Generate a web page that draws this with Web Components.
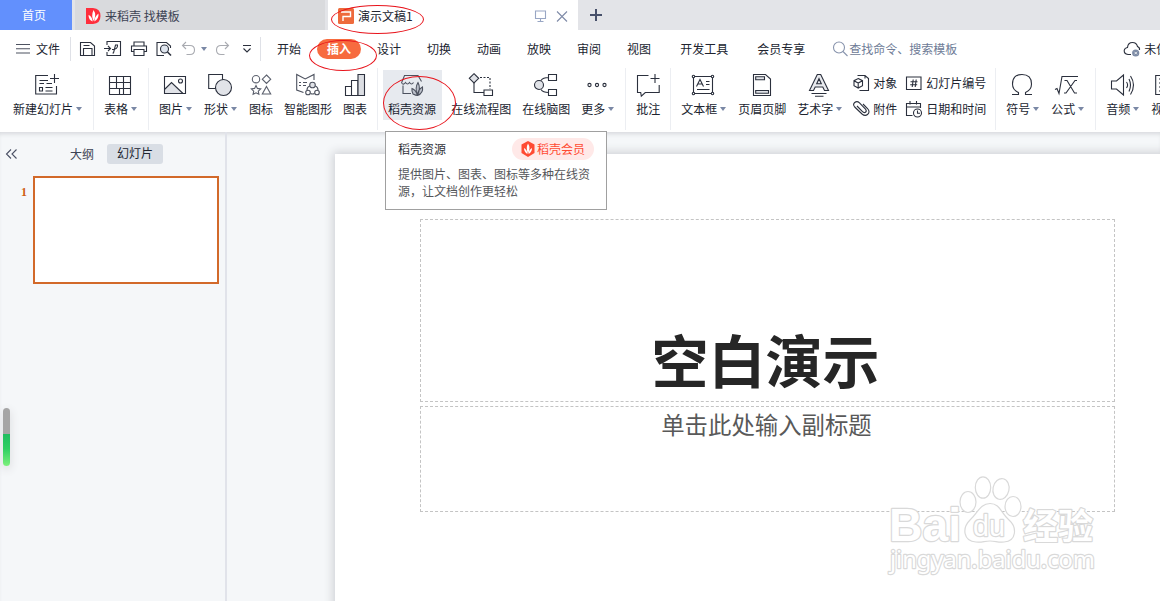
<!DOCTYPE html>
<html lang="zh-CN">
<head>
<meta charset="utf-8">
<title>演示文稿1</title>
<style>
    html, body {
        margin: 0;
        height: 100%;
        overflow: hidden;
    }

    body {
        font: 12px/16px "Noto Sans CJK SC", "Liberation Sans", sans-serif;
        color: #20242f;
        background: #f5f7f9;
    }
</style>
</head>
<body>
<presentation-app></presentation-app>

<script>
const ICONS = {
    newslide: '<path d="M13 2.5H.7V21H21.5V13M4.500 7.500H13M4.500 10.500H9M11.500 10.500H17M10.500 14.500H17.500M10.500 18H17.500M4.500 14.500H7.500V18H4.500ZM19.500 1V10M15 5.500H24"/>',
    table: '<path d="M1.500 3.500H22.500V21.500H1.500ZM1.500 9.500H22.500M1.500 15.500H22.500M8.500 3.500V15.500M15.500 3.500V9.500M11.500 15.500V21.500M15.500 9.500V21.500"/>',
    picture: '<path fill="#e1e3e8" d="M2 17 8.500 9.500 20 21H2Z" stroke="none"/><path d="M1.500 3.500H22.500V20.500H1.500ZM1.500 16.500 8.500 9.500 20 20.500"/><circle cx="17.500" cy="8" r="2"/>',
    shape: '<path d="M.7 1.500H14.500V15.500H.7Z"/><circle cx="15.500" cy="14.500" r="8" fill="#e1e3e8"/>',
    glyphs: '<g stroke="#5b606d"><circle cx="7" cy="6.200" r="3.700"/><path d="M17.500 2 21.700 6.200 17.500 10.500 13.300 6.200ZM17.500 13.500 21.700 21H13.300ZM7 12.500 8.400 15.400 11.700 15.900 9.300 18.100 9.900 21.300 7 19.800 4.100 21.300 4.700 18.100 2.300 15.900 5.600 15.400Z"/></g>',
    smart: '<g stroke="#4d525f"><path d="M7.500 19.500.7 17V1.500L9.200 6 18 1.500V7M3 9.500H5M7 9.500H11M3 12.500H5M7 12.500H10" /><circle cx="16.500" cy="12" r="2.800" fill="#e1e3e8"/><circle cx="12" cy="19.500" r="2.300"/><circle cx="21" cy="19.500" r="2.300"/><path d="M13.700 13Q11 14 11 17M19.300 13Q22 14 22 17M14.500 20.500Q16.500 21.500 18.500 20.500"/></g>',
    chart: '<path d="M2.500 13.500H8.500V22.500H2.500ZM8.500 7.500H15V22.500H8.500Z"/><path fill="#dcdee3" d="M15 1.500H21.500V22.500H15Z"/>',
    store: '<g stroke="#4d525f"><path d="M1.500 10 4.500 2.500H18L21.500 8.500M1.500 10Q3.500 12.500 5.500 9.500 7.500 12.500 9.500 9.500 11.500 12.500 13.500 9.500M3 12.500V20.500H11"/><path fill="#bcc0ca" d="M17.500 22.500Q14.500 15 18 9.500 21 15 17.500 22.500Q16 22.500 13 21 11.500 18 12 15.500 16 17 17.500 22.500Q17.500 17 22.500 14 23.500 20 17.500 22.500"/></g>',
    flow: '<path fill="#e1e3e8" d="M5 .7 9.700 5.300 5 10 .3 5.300Z"/><path d="M5 10V19.500H15M15 17H23.500V22.500H15Z"/><path stroke-dasharray="2 1.500" d="M11 4.500H21V16"/>',
    mind: '<circle cx="5" cy="12" r="4.500" fill="#e1e3e8"/><path d="M14.500 1.500H22.500V7.500H14.500ZM14.500 16.500H22.500V22.500H14.500ZM7 7.500Q9 4.500 14.500 4.500M7 16.500Q9 19.500 14.500 19.500"/>',
    more: '<circle cx="4.500" cy="12" r="1.600"/><circle cx="12" cy="12" r="1.600"/><circle cx="19.500" cy="12" r="1.600"/>',
    comment: '<path d="M12.500 2.500H1.500V19.500H4.700L5.300 23.200 9.300 19.500H23.200V12M19 1V10M14.500 5.500H23.500"/>',
    textbox: '<path d="M2.500 3.500H21.500V20.500H2.500ZM15 8.500H18.500M15 11.500H18.500M6 16.500H18.500"/><g fill="#fff"><circle cx="2.500" cy="3.500" r="1.200"/><circle cx="21.500" cy="3.500" r="1.200"/><circle cx="2.500" cy="20.500" r="1.200"/><circle cx="21.500" cy="20.500" r="1.200"/></g><path d="M5.500 13.500 9 6.500 12.500 13.500M6.700 11H11.300"/>',
    header: '<path d="M3.500 1.500H15.500L20.500 6V22.500H3.500Z"/><path fill="#e1e3e8" d="M5.700 3.700H14.500V6.700H5.700ZM5.700 17.500H18.500V20.300H5.700Z"/>',
    wordart: '<path fill="#e8eaee" d="M2.500 17.500 10.300 1.500H13.700L21.500 17.500H17.500L15.800 14H8.200L6.500 17.500ZM9.700 10.800 12 5.700 14.300 10.800Z"/><path d="M4.500 20.500H19.500M8 23.300H16.500"/>',
    omega: '<path d="M2 21.500H8.500V19.500Q2.500 17 2.500 11 2.500 1.500 12 1.500 21.500 1.500 21.500 11 21.500 17 15.500 19.500V21.500H22"/>',
    formula: '<path d="M0 16.500 2 15.500 4 20.500 7 3.500H23M9.500 7.500H12L19.500 20H22M22 7.500H20L11 20H9"/>',
    audio: '<path d="M1.500 8H6.500L13.500 2V22L6.500 16H1.500Z" /><path d="M16.500 9Q18.700 12 16.500 15M19 6Q22 12 19 18.500M20.500 3Q26.500 12 20.500 21.500"/>',
    video: '<path d="M.7 2.500H23V21.500H.7ZM4 6H5.500M4 10H5.500M4 14H5.500M4 18H5.500M8 2.500V21.500"/>',
    object: '<path d="M5.500 1.500H13L16.500 4.500V16.500H7.500M13 1.500V4.500"/><path fill="#fff" d="M6.200 4.500 10.500 6.700V11.700L6.200 14 2 11.700V6.700ZM2 6.700 6.200 9 10.500 6.700M6.200 9V14"/>',
    clip: '<path d="M11 4 15.500 8.500Q18.500 12 15.500 14.500 13 16.500 10 14L2.700 7Q.5 4.500 2.700 2.500 5 .5 7.500 2.800L13.500 9Q15 11 13.500 12.300 12 13.200 10.500 11.700L5 6"/>',
    number: '<path d="M1.500 3H16V15.500H1.500ZM8.200 5.500 7.200 13M11.200 5.500 10.200 13M5.500 7.700H12.500M5.200 10.700H12.200"/>',
    date: '<path d="M7.500 15.500H1.500V3.500H15.500V8M1.500 7H15.500M5 1V4.500M11.500 1V4.500"/><circle cx="12.500" cy="13" r="4"/><path d="M12.500 10.500V13.200H15"/>',
    menu: '<path stroke="#4d5260" d="M2 4.500H16M2 8.700H16M2 13H16"/>',
    save: '<path d="M1.500 2.500H11.500L15.500 6V15.500H1.500ZM4.500 15.500V8.500H13V15.500M4.500 5.500H10.500"/>',
    export: '<path d="M3 5V1.500H16.500V15.500H3V12M0 8.500H6M4 6 6.500 8.500 4 11M8.500 13H9.500L11.500 5H13.500Q14 9.500 8 9.500"/>',
    print: '<path d="M4 6V2H14V6M4 11.500H1.500V6H16.500V11.500H14M4 9.500H14V15.500H4Z"/>',
    preview: '<path d="M9 15.500H2V2.500H11.500L15.500 6V8"/><circle cx="9.500" cy="9" r="4" fill="#dfe5ee"/><path stroke-width="1.600" d="M12.500 12 16 15.500"/>',
    undo: '<path stroke="#a9abb1" d="M6 2 2.500 5.500 6 9M2.500 5.500H10Q14.500 5.500 14.500 10 14.500 14.500 10 14.500H6.500"/>',
    redo: '<path stroke="#a9abb1" d="M12 2 15.500 5.500 12 9M15.500 5.500H8Q3.500 5.500 3.500 10 3.500 14.500 8 14.500H11.500"/>',
    expand: '<path d="M5 5.500H13M5.500 8.500 9 12 12.500 8.500"/>',
    search: '<g stroke="#8894ad"><circle cx="8" cy="7.500" r="5.500"/><path d="M12 11.500 16.500 16"/></g>',
    cloud: '<path d="M8 14.500H5Q1 14 1.200 10.500 1.500 8 4.500 7.500 5 2.500 9.500 2.500 13.500 2.500 14.500 6.500 17 7.500 16.500 10"/><circle cx="12.700" cy="13" r="3.600" fill="#7d8ba5" stroke="none"/><path stroke="#fff" stroke-width=".8" d="M11.500 11.800 14 14.300M14 11.800 11.500 14.300"/>',
    docer: '<path fill="#ff2e3c" stroke="none" d="M2 1H9Q16.500 1.500 16.500 9 16.500 16.500 9 17H2Z"/><path fill="#fff" stroke="none" d="M9.500 3Q13 8 9.500 14 7 8.500 9.500 3ZM4.500 8Q8 9 8.700 14.500 4.500 13 4.500 8ZM14.500 6.500Q15 12 10.300 14.500 10.500 9.500 14.500 6.500Z"/>',
    wpp: '<rect x="1" y="1" width="16" height="16" rx="1.500" fill="#ee6a3c" stroke="none"/><path stroke="#fff" stroke-width="1.400" d="M4 5H13.500V9.500H6V14"/>',
    screen: '<path stroke="#98a6c4" d="M3.500 4H13.500V11.500H3.500ZM8.500 11.500V14M5.500 14.500H11.500"/>',
    close: '<path stroke="#7f8ba8" d="M4 4.500 14 14.500M14 4.500 4 14.500"/>',
    plus: '<path stroke="#47506a" stroke-width="2" d="M9 3V15M3 9H15"/>',
    collapse: '<path stroke="#4a5064" d="M8 4.500 3.500 9 8 13.500M13.500 4.500 9 9 13.500 13.500"/>',
    vip: '<path fill="#ff4b33" stroke="none" d="M9 1 15.500 4.500V13L9 17 2.500 13V4.500Z"/><path fill="#fff" stroke="none" d="M9 3.500Q12 8 9 13.500 6.500 8 9 3.500ZM5 8Q8 9.500 8.500 14 5 12 5 8ZM13 8Q13 12 9.500 14 10 9.500 13 8Z"/>'
};

class UiIcon extends HTMLElement {
    connectedCallback() {
        const size = this.getAttribute('size') || 18;
        this.attachShadow({mode: 'open'}).innerHTML = `
        <style>
        :host { display: block; flex: none; width: ${size}px; height: ${size}px; }
        svg { display: block; overflow: visible; fill: none; stroke: #2b303d; stroke-width: 1.1; }
        </style>
        <svg width="${size}" height="${size}">${ICONS[this.getAttribute('name')]}</svg>
        `;
    }
}

class DocTab extends HTMLElement {
    connectedCallback() {
        const icon = this.getAttribute('icon');
        this.attachShadow({mode: 'open'}).innerHTML = `
        <style>
        :host {
            display: flex;
            align-items: center;
            gap: 3px;
            box-sizing: border-box;
            height: 30px;
            padding: 1px 0 0 9px;
            background: #d9dadd;
            color: #3d4354;
        }
        :host([kind=home]) {
            justify-content: center;
            padding: 0 4px 0 0;
            background: #6290fd;
            color: #fff;
        }
        :host([kind=active]) { background: #fff; color: #20242f; }
        span { flex: 1; }
        :host([kind=home]) span { flex: none; }
        </style>
        ${icon ? `<ui-icon name="${icon}"></ui-icon>` : ''}
        <span><slot></slot></span>
        <slot name="end"></slot>
        `;
    }
}

class TitleBar extends HTMLElement {
    connectedCallback() {
        this.attachShadow({mode: 'open'}).innerHTML = `
        <style>
        :host { display: flex; gap: 3px; height: 30px; background: #e3e4e8; }
        .home { width: 72px; }
        .docer { width: 250px; }
        .doc { width: 250px; padding-right: 7px; }
        .add { align-self: center; margin-left: 6px; }
        </style>
        <doc-tab class="home" kind="home">首页</doc-tab>
        <doc-tab class="docer" icon="docer">来稻壳 找模板</doc-tab>
        <doc-tab class="doc" kind="active" icon="wpp">演示文稿1
            <ui-icon slot="end" name="screen"></ui-icon>
            <ui-icon slot="end" name="close"></ui-icon>
        </doc-tab>
        <ui-icon class="add" name="plus"></ui-icon>
        `;
    }
}

class MenuItem extends HTMLElement {
    connectedCallback() {
        this.attachShadow({mode: 'open'}).innerHTML = `
        <style>
        :host { display: block; padding: 0 13px; white-space: nowrap; }
        :host([wide]) { padding-left: 16px; }
        :host([active]) {
            margin: 0 3px;
            padding: 2px 10px;
            border-radius: 10px;
            background: #f76b3f;
            color: #fff;
            font-weight: bold;
        }
        </style>
        <slot></slot>
        `;
    }
}

class MenuBar extends HTMLElement {
    connectedCallback() {
        this.attachShadow({mode: 'open'}).innerHTML = `
        <style>
        :host {
            display: flex;
            align-items: center;
            height: 38px;
            background: #fff;
            overflow: hidden;
            white-space: nowrap;
        }
        :host > * { flex: none; }
        .file { display: flex; gap: 4px; align-items: center; width: 56px; padding-left: 14px; }
        .quick {
            display: flex;
            align-items: center;
            justify-content: space-between;
            box-sizing: border-box;
            width: 191px;
            height: 24px;
            padding: 0 4px 0 8px;
            border: solid #dfe1e7;
            border-width: 0 1px;
        }
        .arrow { border: 3px solid transparent; border-top: 4px solid #7a88a5; border-bottom: 0; margin: 0 -2px 0 -4px; }
        .menus { display: flex; align-items: center; margin-left: 3px; }
        .search { display: flex; align-items: center; margin-left: 13px; color: #6e7b96; }
        .cloud { display: flex; align-items: center; gap: 3px; margin-left: 166px; }
        </style>
        <div class="file"><ui-icon name="menu"></ui-icon>文件</div>
        <div class="quick">
            <ui-icon name="save"></ui-icon>
            <ui-icon name="export"></ui-icon>
            <ui-icon name="print"></ui-icon>
            <ui-icon name="preview"></ui-icon>
            <ui-icon name="undo"></ui-icon>
            <i class="arrow"></i>
            <ui-icon name="redo"></ui-icon>
            <ui-icon name="expand"></ui-icon>
        </div>
        <div class="menus">
            <menu-item>开始</menu-item>
            <menu-item active>插入</menu-item>
            <menu-item>设计</menu-item>
            <menu-item>切换</menu-item>
            <menu-item>动画</menu-item>
            <menu-item>放映</menu-item>
            <menu-item>审阅</menu-item>
            <menu-item>视图</menu-item>
            <menu-item wide>开发工具</menu-item>
            <menu-item wide>会员专享</menu-item>
        </div>
        <div class="search"><ui-icon name="search"></ui-icon>查找命令、搜索模板</div>
        <div class="cloud"><ui-icon name="cloud"></ui-icon>未保存</div>
        `;
    }
}

class ToolButton extends HTMLElement {
    connectedCallback() {
        this.attachShadow({mode: 'open'}).innerHTML = `
        <style>
        :host {
            display: flex;
            flex-direction: column;
            align-items: center;
            flex: none;
            gap: 4px;
            height: 44px;
            padding: 3px 5.5px;
            white-space: nowrap;
        }
        :host([active]) { background: #e7eaef; }
        :host([drop]) ui-icon { margin-right: 2px; }
        :host([drop]) span::after {
            content: "";
            display: inline-block;
            margin: 0 1px 3px 3px;
            border: 3px solid transparent;
            border-top: 4px solid #7a88a5;
            border-bottom: 0;
        }
        </style>
        <ui-icon size="24" name="${this.getAttribute('icon')}"></ui-icon>
        <span><slot></slot></span>
        `;
    }
}

class ToolRow extends HTMLElement {
    connectedCallback() {
        this.attachShadow({mode: 'open'}).innerHTML = `
        <style>
        :host { display: flex; align-items: center; gap: 3px; height: 26px; white-space: nowrap; }
        </style>
        <ui-icon name="${this.getAttribute('icon')}"></ui-icon><slot></slot>
        `;
    }
}

class ToolGroup extends HTMLElement {
    connectedCallback() {
        this.attachShadow({mode: 'open'}).innerHTML = `
        <style>
        :host {
            display: flex;
            flex: none;
            align-items: flex-start;
            height: 60px;
            padding: 2px 4.5px 0;
            border-right: 1px solid #eceef2;
        }
        </style>
        <slot></slot>
        `;
    }
}

class RibbonBar extends HTMLElement {
    connectedCallback() {
        this.attachShadow({mode: 'open'}).innerHTML = `
        <style>
        :host {
            display: flex;
            height: 64px;
            background: #fff;
            overflow: hidden;
        }
        .first { padding-left: 7.5px; }
        .flow { margin-left: 4px; }
        .rows { display: grid; grid-template-columns: auto auto; column-gap: 8px; margin-left: 3.5px; }
        .text { padding-right: 9px; }
        </style>
        <tool-group class="first"><tool-button drop icon="newslide">新建幻灯片</tool-button></tool-group>
        <tool-group><tool-button drop icon="table">表格</tool-button></tool-group>
        <tool-group>
            <tool-button drop icon="picture">图片</tool-button>
            <tool-button drop icon="shape">形状</tool-button>
            <tool-button icon="glyphs">图标</tool-button>
            <tool-button icon="smart">智能图形</tool-button>
            <tool-button icon="chart">图表</tool-button>
        </tool-group>
        <tool-group>
            <tool-button active icon="store">稻壳资源</tool-button>
            <tool-button class="flow" icon="flow">在线流程图</tool-button>
            <tool-button icon="mind">在线脑图</tool-button>
            <tool-button drop icon="more">更多</tool-button>
        </tool-group>
        <tool-group><tool-button icon="comment">批注</tool-button></tool-group>
        <tool-group class="text">
            <tool-button drop icon="textbox">文本框</tool-button>
            <tool-button icon="header">页眉页脚</tool-button>
            <tool-button drop icon="wordart">艺术字</tool-button>
            <div class="rows">
                <tool-row icon="object">对象</tool-row>
                <tool-row icon="number">幻灯片编号</tool-row>
                <tool-row icon="clip">附件</tool-row>
                <tool-row icon="date">日期和时间</tool-row>
            </div>
        </tool-group>
        <tool-group>
            <tool-button drop icon="omega">符号</tool-button>
            <tool-button drop icon="formula">公式</tool-button>
        </tool-group>
        <tool-group>
            <tool-button drop icon="audio">音频</tool-button>
            <tool-button drop icon="video">视频</tool-button>
        </tool-group>
        `;
    }
}

class SlidePane extends HTMLElement {
    connectedCallback() {
        this.attachShadow({mode: 'open'}).innerHTML = `
        <style>
        :host {
            display: block;
            flex: none;
            width: 225px;
            border-right: 2px solid #e1e3ea;
        }
        header { display: flex; align-items: center; height: 20px; padding: 12px 0 12px 3px; color: #3d4354; }
        .outline { margin: -1px 0 0 49px; }
        .slides {
            margin-left: 13px;
            padding: 1px 10px 3px;
            border-radius: 3px;
            background: #d9dee5;
            color: #20242f;
        }
        .slide { display: flex; }
        b { width: 27px; margin-right: 6px; box-sizing: border-box; padding-top: 8px; text-align: right; font-family: "Liberation Serif", serif; color: #cf5f14; }
        .thumb { box-sizing: border-box; width: 186px; height: 108px; border: 2px solid #d2692a; background: #fff; }
        .level {
            position: absolute;
            left: 3px;
            top: 408px;
            width: 7px;
            height: 58px;
            border-radius: 4px;
            background: linear-gradient(#a5a5a5 44%, #1fbd60 44%, #2fcf63 70%, #7cf07c);
            box-shadow: 0 3px 8px 1px #dfe0e3;
        }
        </style>
        <header>
            <ui-icon name="collapse"></ui-icon>
            <span class="outline">大纲</span>
            <span class="slides">幻灯片</span>
        </header>
        <div class="slide"><b>1</b><div class="thumb"></div></div>
        <div class="level"></div>
        `;
    }
}

class SlideCanvas extends HTMLElement {
    connectedCallback() {
        this.attachShadow({mode: 'open'}).innerHTML = `
        <style>
        :host { display: block; flex: 1; overflow: hidden; }
        .page {
            display: grid;
            grid-template-rows: 183px 106px;
            grid-template-columns: 695px;
            row-gap: 4px;
            box-sizing: border-box;
            width: 866px;
            height: 488px;
            margin: 22px 0 0 108px;
            padding: 65px 86px 0 85px;
            background: #fff;
            box-shadow: 0 0 9px 2px #cfd1d5;
        }
        .page > div {
            display: flex;
            justify-content: center;
            box-sizing: border-box;
            border: 1px dashed #c4c4c4;
        }
        .title {
            align-items: flex-end;
            padding: 0 4px 7px 0;
            font-size: 57px;
            font-weight: bold;
            line-height: 72px;
            color: #262626;
        }
        .sub { padding: 0 2px 0 0; font-size: 23.4px; line-height: 34px; color: #595959; }
        </style>
        <div class="page">
            <div class="title">空白演示</div>
            <div class="sub">单击此处输入副标题</div>
        </div>
        `;
    }
}

class TipCard extends HTMLElement {
    connectedCallback() {
        this.attachShadow({mode: 'open'}).innerHTML = `
        <style>
        :host {
            position: absolute;
            left: 385px;
            top: 131px;
            box-sizing: border-box;
            width: 222px;
            height: 79px;
            padding: 6px 12px 0 12px;
            border: 1px solid #a0a0a0;
            background: #fff;
            color: #55565a;
        }
        header { display: flex; align-items: center; justify-content: space-between; height: 22px; color: #303238; }
        .vip {
            display: flex;
            align-items: center;
            height: 22px;
            padding: 0 9px 0 7px;
            border-radius: 11px;
            background: #ffe9e8;
            color: #ff4b33;
        }
        p { margin: 5px -3px 0 0; line-height: 17px; }
        </style>
        <header>
            <slot name="title"></slot>
            <span class="vip"><ui-icon name="vip"></ui-icon>稻壳会员</span>
        </header>
        <p><slot></slot></p>
        `;
    }
}

// hand-drawn style ellipse laid over the window
class InkRing extends HTMLElement {
    connectedCallback() {
        this.attachShadow({mode: 'open'}).innerHTML = `
        <style>
        :host {
            position: absolute;
            box-sizing: border-box;
            border: 1px solid #e8141c;
            border-radius: 50%;
            pointer-events: none;
        }
        </style>
        `;
    }
}

class WaterMark extends HTMLElement {
    connectedCallback() {
        this.attachShadow({mode: 'open'}).innerHTML = `
        <style>
        :host { position: absolute; left: 880px; top: 470px; }
        svg { display: block; fill: #fff; stroke: #d9d9d9; stroke-width: 1.2; stroke-linejoin: round; }
        text { paint-order: stroke; stroke-width: 2.4; font-family: "Liberation Sans", sans-serif; }
        </style>
        <svg width="230" height="120">
            <text x="9" y="71" font-size="46" font-weight="bold" textLength="72" lengthAdjust="spacingAndGlyphs">Bai</text>
            <ellipse cx="88" cy="32" rx="8" ry="10.500"/>
            <ellipse cx="103" cy="17.500" rx="7.700" ry="10.700"/>
            <ellipse cx="121" cy="19" rx="8" ry="10.500" transform="rotate(12 121 19)"/>
            <ellipse cx="133" cy="36.500" rx="8" ry="10"/>
            <path d="M110 33.500C120 33.500 121 43 129 50 137 57 137 71 124 72 117 72.500 116 71 110 71 104 71 103 72.500 96 72 83 71 82 58 90 50 98 43 100 33.500 110 33.500Z"/>
            <text x="93" y="66" font-size="29" textLength="32" lengthAdjust="spacingAndGlyphs">du</text>
            <text x="143" y="69" font-size="35" font-weight="bold" textLength="70" style="font-family:'Noto Sans CJK SC',sans-serif">经验</text>
            <text x="10" y="98" font-size="24" textLength="205" lengthAdjust="spacingAndGlyphs" style="font-family:'Noto Sans',sans-serif">jingyan.baidu.com</text>
        </svg>
        `;
    }
}

class PresentationApp extends HTMLElement {
    connectedCallback() {
        this.attachShadow({mode: 'open'}).innerHTML = `
        <style>
        :host { display: flex; flex-direction: column; position: relative; height: 100vh; overflow: hidden; }
        main { display: flex; flex: 1; min-height: 0; box-shadow: inset 0 4px 4px -2px #d7d9dd; }
        .ring-doc { left: 331px; top: 5px; width: 93px; height: 29px; }
        .ring-menu { left: 309px; top: 40px; width: 68px; height: 31px; }
        .ring-tool { left: 383px; top: 76px; width: 73px; height: 54px; }
        </style>
        <title-bar></title-bar>
        <menu-bar></menu-bar>
        <ribbon-bar></ribbon-bar>
        <main>
            <slide-pane></slide-pane>
            <slide-canvas></slide-canvas>
        </main>
        <ink-ring class="ring-doc"></ink-ring>
        <ink-ring class="ring-menu"></ink-ring>
        <ink-ring class="ring-tool"></ink-ring>
        <tip-card><span slot="title">稻壳资源</span>提供图片、图表、图标等多种在线资源，让文档创作更轻松</tip-card>
        <water-mark></water-mark>
        `;
    }
}

customElements.define('ui-icon', UiIcon);
customElements.define('doc-tab', DocTab);
customElements.define('title-bar', TitleBar);
customElements.define('menu-item', MenuItem);
customElements.define('menu-bar', MenuBar);
customElements.define('tool-button', ToolButton);
customElements.define('tool-row', ToolRow);
customElements.define('tool-group', ToolGroup);
customElements.define('ribbon-bar', RibbonBar);
customElements.define('slide-pane', SlidePane);
customElements.define('slide-canvas', SlideCanvas);
customElements.define('tip-card', TipCard);
customElements.define('ink-ring', InkRing);
customElements.define('water-mark', WaterMark);
customElements.define('presentation-app', PresentationApp);
</script>
</body>
</html>
